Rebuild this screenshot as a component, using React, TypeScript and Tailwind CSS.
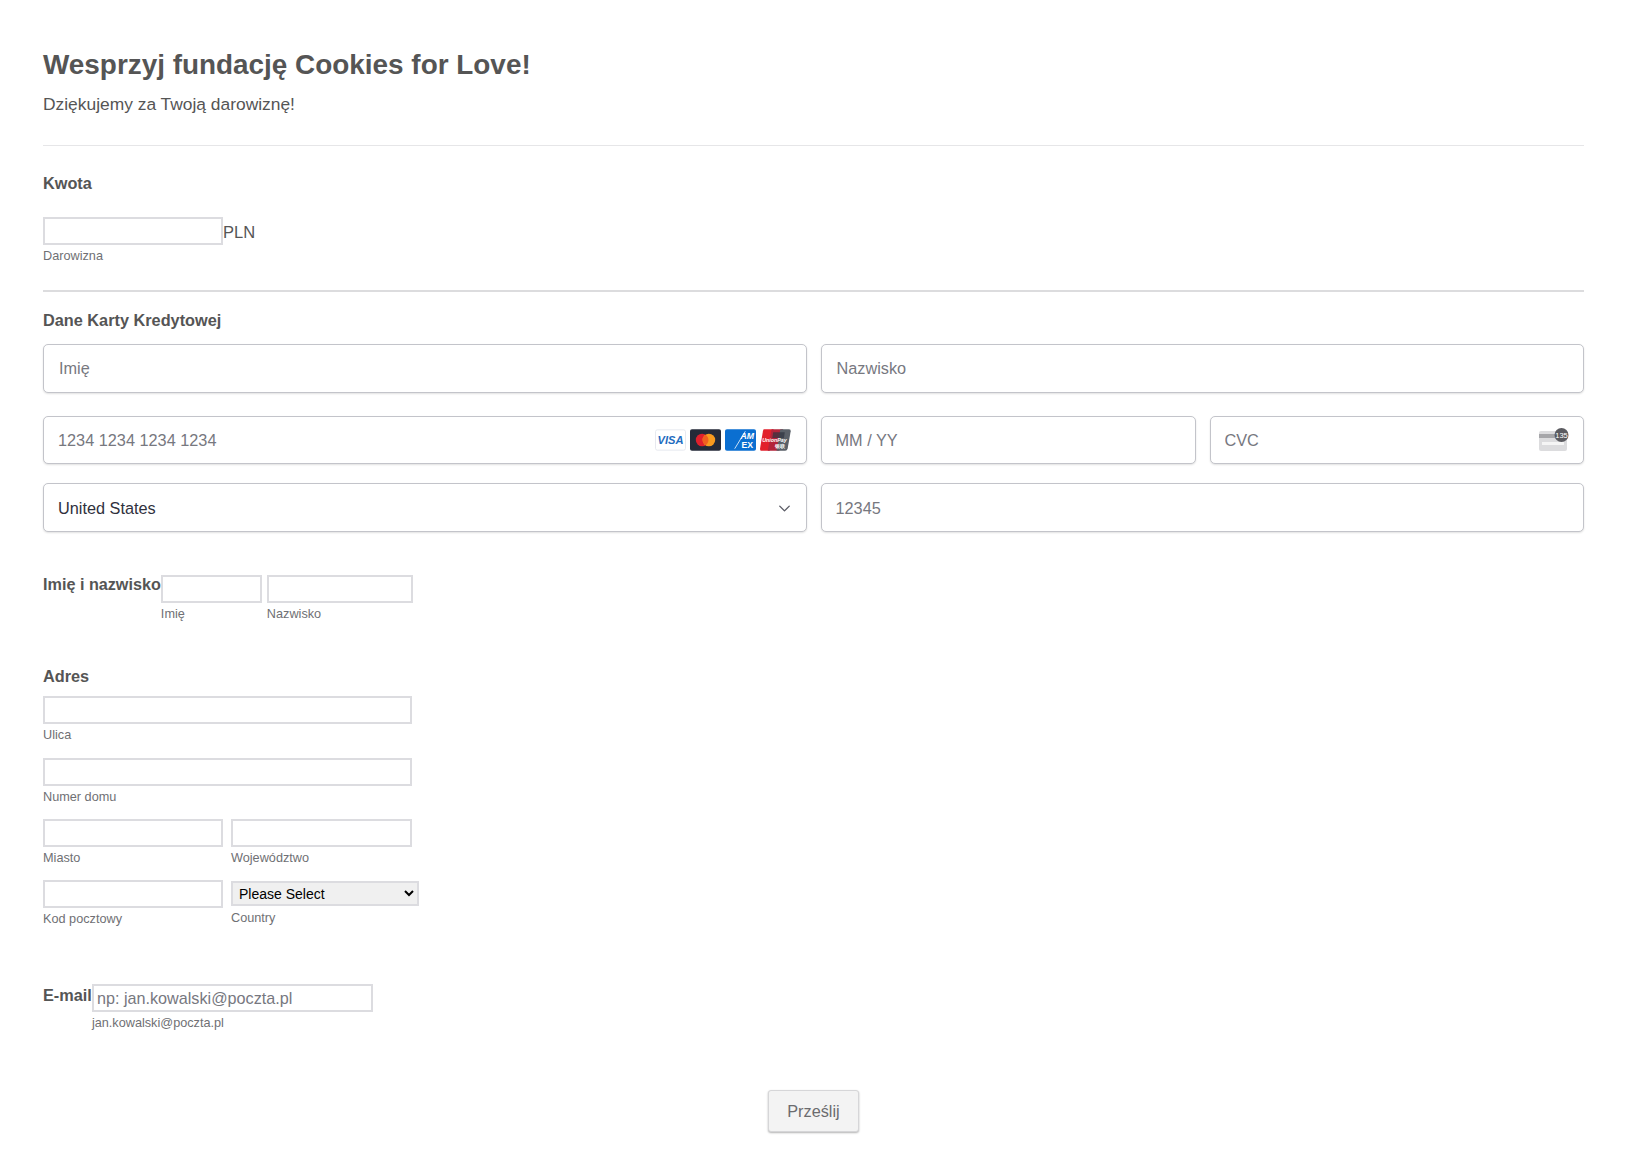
import React from "react";
import { ChevronDown } from "lucide-react";

const plain = "block h-[28px] border-2 border-[#dcdce0] bg-white outline-none";
const stripe = "h-full w-full min-w-0 bg-transparent text-[16.3px] text-[#30313d] placeholder:text-[#77787f] outline-none";
const box = "flex items-center rounded-[5px] border border-[#c3c4ca] bg-white shadow-[0_1px_2px_rgba(0,0,0,0.12)]";
const sub = "block text-[12.7px] leading-[15px] text-[#6f7074]";

function Field({ label, w, className = "" }: { label: string; w: string; className?: string }) {
  return (
    <div className={className}>
      <input className={`${plain} ${w}`} />
      <span className={`${sub} mt-[4px]`}>{label}</span>
    </div>
  );
}

function Cards() {
  return (
    <div className="flex shrink-0 items-center gap-[4px]">
      <svg width="31" height="22" viewBox="0 0 32 22">
        <rect x="0.5" y="0.5" width="31" height="21" rx="2" fill="#fff" stroke="#e6e8ee" />
        <text x="16" y="15.5" textAnchor="middle" fontFamily="Liberation Sans" fontStyle="italic" fontWeight="700" fontSize="11.5" fill="#1f6cc0">VISA</text>
      </svg>
      <svg width="31" height="22" viewBox="0 0 32 22">
        <rect width="32" height="22" rx="2" fill="#252a38" />
        <circle cx="12.5" cy="11" r="6.5" fill="#e0202c" />
        <circle cx="19.5" cy="11" r="6.5" fill="#f79a1f" />
        <path d="M16 5.5a6.5 6.5 0 0 1 0 11a6.5 6.5 0 0 1 0-11z" fill="#f0601f" />
      </svg>
      <svg width="31" height="22" viewBox="0 0 32 22">
        <rect width="32" height="22" rx="2" fill="#0b6fd1" />
        <text x="23" y="10" textAnchor="middle" fontFamily="Liberation Sans" fontWeight="700" fontStyle="italic" fontSize="9" fill="#fff">AM</text>
        <text x="23" y="19" textAnchor="middle" fontFamily="Liberation Sans" fontWeight="700" fontSize="9" fill="#fff">EX</text>
        <path d="M10 20 L21 2" stroke="#fff" strokeWidth="0.8" />
      </svg>
      <svg width="31" height="22" viewBox="0 0 32 22">
        <path d="M4 0H14L10 22H1Q0 22 0 20L3 2Q3.400 0 4 0Z" fill="#e2202c" />
        <path d="M12 0H24L20 22H8Z" fill="#b3253a" />
        <path d="M21 0H30Q32 0 31.700 2L28.500 20Q28 22 26 22H17Z" fill="#5a6068" />
        <rect x="14" y="3" width="12" height="6" fill="#2f3540" opacity="0.7" transform="skewX(-8)" />
        <text x="15" y="13" textAnchor="middle" fontFamily="Liberation Sans" fontStyle="italic" fontWeight="700" fontSize="5.500" fill="#fff">UnionPay</text>
        <text x="21" y="19.500" textAnchor="middle" fontFamily="Liberation Sans" fontWeight="700" fontSize="5" fill="#fff">银联</text>
      </svg>
    </div>
  );
}

function CvcIcon() {
  return (
    <svg width="30" height="24" viewBox="0 0 30 24" className="shrink-0">
      <rect x="0" y="3" width="28" height="20" rx="2" fill="#dcdcde" />
      <rect x="0" y="6" width="28" height="4" fill="#a6a6a9" />
      <rect x="3" y="14" width="22" height="3" fill="#f5f5f5" />
      <circle cx="22.500" cy="7" r="7" fill="#5b5b60" />
      <text x="22.500" y="9.500" textAnchor="middle" fontFamily="Liberation Sans" fontSize="7.500" fill="#fff">135</text>
    </svg>
  );
}

export default function App() {
  return (
    <div className="min-h-[1175px] bg-white pl-[43px] pr-[44px] pt-[47px] font-['Liberation_Sans',Arial,sans-serif] text-[#555]">
      <h1 className="text-[27.9px] font-bold leading-[36px] text-[#555]">Wesprzyj fundację Cookies for Love!</h1>
      <p className="mt-[10px] text-[17.4px] leading-[22px]">Dziękujemy za Twoją darowiznę!</p>
      <hr className="mt-[30px] h-px border-0 bg-[#e6e6e8]" />

      <h2 className="mt-[27px] text-[16.3px] font-bold leading-[20px]">Kwota</h2>
      <div className="mt-[24px] flex items-start">
        <input className={`${plain} w-[180px]`} />
        <span className="pt-[3px] text-[16.5px] leading-[25px]">PLN</span>
      </div>
      <span className={`${sub} mt-[4px]`}>Darowizna</span>
      <hr className="mt-[26px] h-[2px] border-0 bg-[#dcdcde]" />

      <h2 className="mt-[18px] text-[16.3px] font-bold leading-[20px]">Dane Karty Kredytowej</h2>
      <div className="mt-[14px] grid grid-cols-2 gap-x-[14px]">
        <div className={`${box} h-[49px] px-[15px]`}><input className={stripe} placeholder="Imię" /></div>
        <div className={`${box} h-[49px] px-[15px]`}><input className={stripe} placeholder="Nazwisko" /></div>
      </div>
      <div className="mt-[23px] grid grid-cols-2 gap-x-[14px]">
        <div className={`${box} h-[48px] pl-[14px] pr-[15px]`}>
          <input className={stripe} placeholder="1234 1234 1234 1234" />
          <Cards />
        </div>
        <div className="flex gap-x-[14px]">
          <div className={`${box} h-[48px] w-[375px] pl-[14px]`}><input className={stripe} placeholder="MM / YY" /></div>
          <div className={`${box} h-[48px] flex-1 pl-[14px] pr-[14px]`}>
            <input className={stripe} placeholder="CVC" />
            <CvcIcon />
          </div>
        </div>
      </div>
      <div className="mt-[19px] grid grid-cols-2 gap-x-[14px]">
        <div className={`${box} h-[49px] justify-between pl-[14px] pr-[12px] pt-px`}>
          <span className="text-[16.3px] text-[#30313d]">United States</span>
          <ChevronDown size={19} strokeWidth={1.7} className="text-[#5b5c66]" />
        </div>
        <div className={`${box} h-[49px] pl-[14px] pt-px`}><input className={stripe} placeholder="12345" /></div>
      </div>

      <div className="mt-[43px] flex items-start">
        <span className="text-[16.2px] font-bold leading-[18px]">Imię i nazwisko</span>
        <Field label="Imię" w="w-[101px]" />
        <Field label="Nazwisko" w="w-[146px]" className="ml-[5px]" />
      </div>

      <h2 className="mt-[43px] text-[16.3px] font-bold leading-[22px]">Adres</h2>
      <Field label="Ulica" w="w-[369px]" className="mt-[9px]" />
      <Field label="Numer domu" w="w-[369px]" className="mt-[15px]" />
      <div className="mt-[14px] flex gap-[8px]">
        <Field label="Miasto" w="w-[180px]" />
        <Field label="Województwo" w="w-[181px]" />
      </div>
      <div className="mt-[14px] flex gap-[8px]">
        <Field label="Kod pocztowy" w="w-[180px]" />
        <div>
          <select className="mt-px block h-[25px] w-[188px] border-2 border-[#dcdce0] bg-[#f0f0f0] pl-[2px] text-[14px] text-black outline-none">
            <option>Please Select</option>
          </select>
          <span className={`${sub} mt-[5px]`}>Country</span>
        </div>
      </div>

      <div className="mt-[57px] flex items-start">
        <span className="pt-px text-[16.3px] font-bold leading-[20px]">E-mail</span>
        <div>
          <input className={`${plain} w-[281px] px-[3px] pt-px text-[16.2px] placeholder:text-[#77787f]`} placeholder="np: jan.kowalski@poczta.pl" />
          <span className={`${sub} mt-[4px]`}>jan.kowalski@poczta.pl</span>
        </div>
      </div>

      <div className="mt-[59px] flex justify-center">
        <button className="h-[42px] w-[91px] rounded-[3px] border border-[#d6d6d8] bg-[#f3f3f3] text-[16.3px] text-[#6b6b6e] shadow-[0_1px_2px_rgba(0,0,0,0.3)]">Prześlij</button>
      </div>
    </div>
  );
}
